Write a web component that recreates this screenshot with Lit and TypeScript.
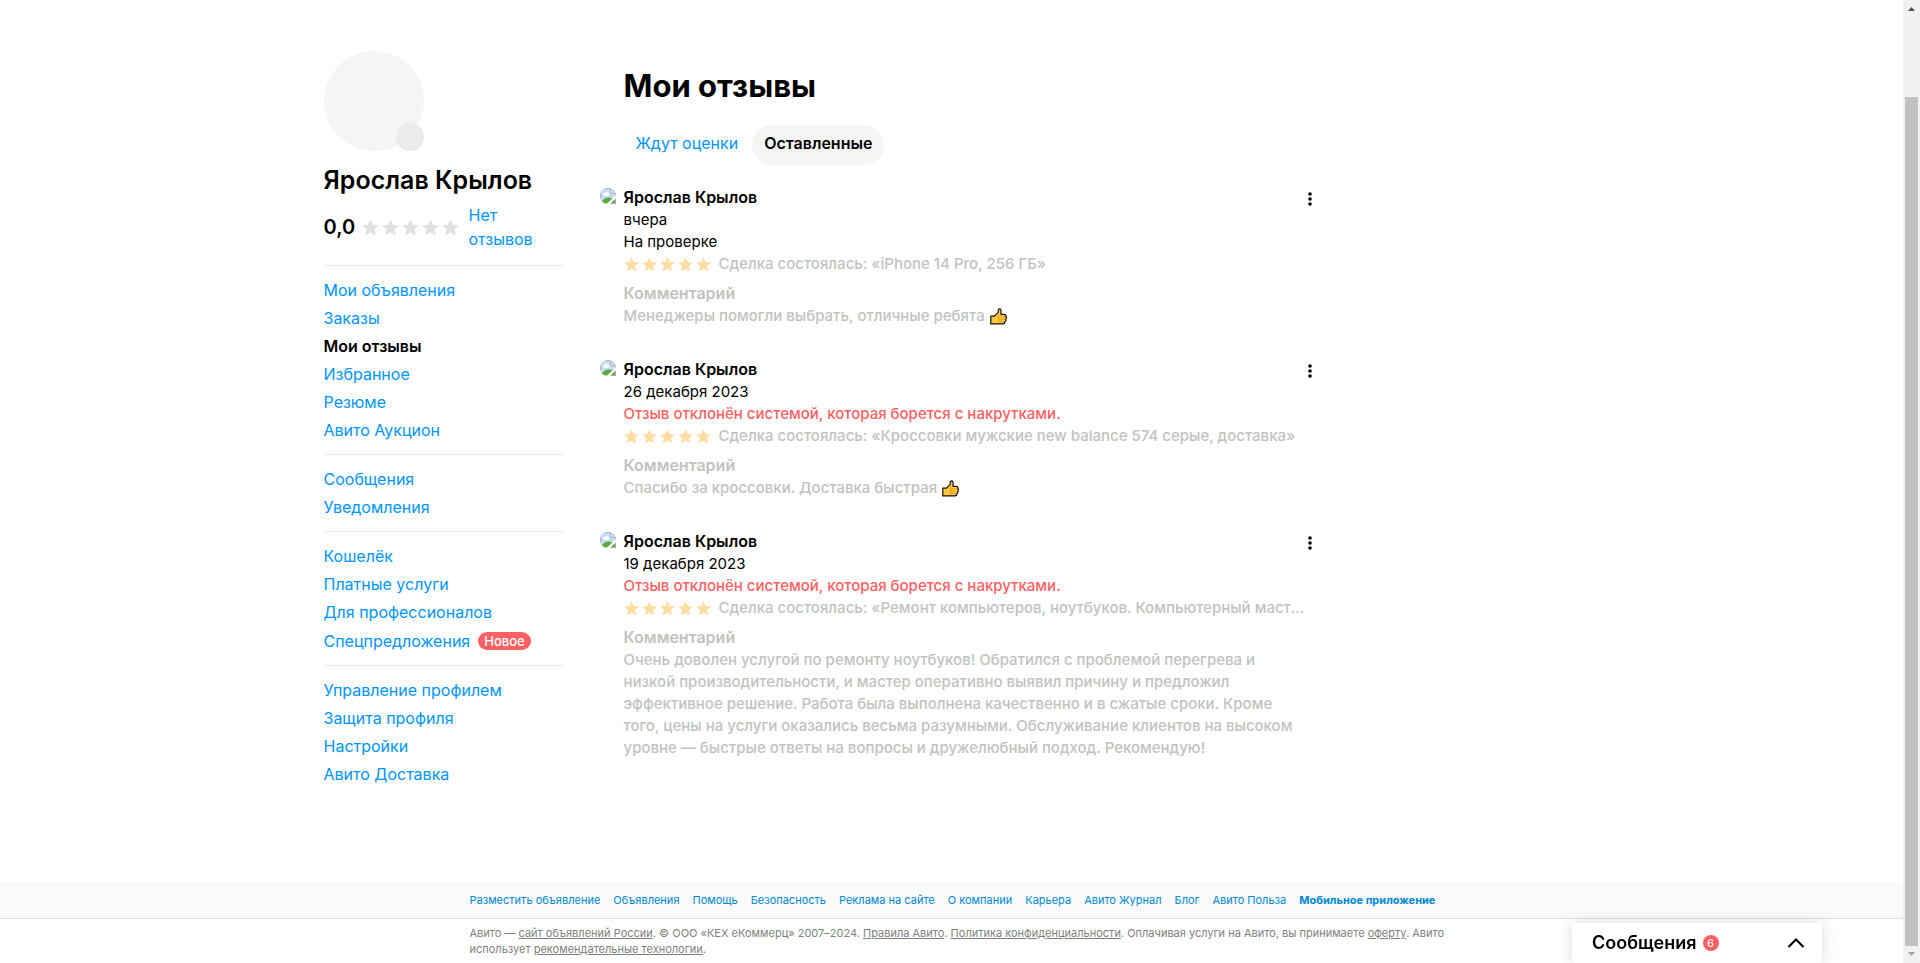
import { LitElement, html, css, svg } from "lit";
import { customElement, property } from "lit/decorators.js";
import { classMap } from "lit/directives/class-map.js";

interface NavItem {
  label: string;
  active?: boolean;
  badge?: string;
}

interface Review {
  author: string;
  date: string;
  status: string;
  rejected: boolean;
  deal: string;
  comment: string;
  thumb: boolean;
}

const NAV: NavItem[][] = [
  [
    { label: "Мои объявления" },
    { label: "Заказы" },
    { label: "Мои отзывы", active: true },
    { label: "Избранное" },
    { label: "Резюме" },
    { label: "Авито Аукцион" },
  ],
  [{ label: "Сообщения" }, { label: "Уведомления" }],
  [
    { label: "Кошелёк" },
    { label: "Платные услуги" },
    { label: "Для профессионалов" },
    { label: "Спецпредложения", badge: "Новое" },
  ],
  [
    { label: "Управление профилем" },
    { label: "Защита профиля" },
    { label: "Настройки" },
    { label: "Авито Доставка" },
  ],
];

const REJECTED = "Отзыв отклонён системой, которая борется с накрутками.";

const REVIEWS: Review[] = [
  {
    author: "Ярослав Крылов",
    date: "вчера",
    status: "На проверке",
    rejected: false,
    deal: "Сделка состоялась: «iPhone 14 Pro, 256 ГБ»",
    comment: "Менеджеры помогли выбрать, отличные ребята",
    thumb: true,
  },
  {
    author: "Ярослав Крылов",
    date: "26 декабря 2023",
    status: REJECTED,
    rejected: true,
    deal: "Сделка состоялась: «Кроссовки мужские new balance 574 серые, доставка»",
    comment: "Спасибо за кроссовки. Доставка быстрая",
    thumb: true,
  },
  {
    author: "Ярослав Крылов",
    date: "19 декабря 2023",
    status: REJECTED,
    rejected: true,
    deal: "Сделка состоялась: «Ремонт компьютеров, ноутбуков. Компьютерный мастер»",
    comment:
      "Очень доволен услугой по ремонту ноутбуков! Обратился с проблемой перегрева и низкой производительности, и мастер оперативно выявил причину и предложил эффективное решение. Работа была выполнена качественно и в сжатые сроки. Кроме того, цены на услуги оказались весьма разумными. Обслуживание клиентов на высоком уровне — быстрые ответы на вопросы и дружелюбный подход. Рекомендую!",
    thumb: false,
  },
];

const FOOTER = [
  "Разместить объявление",
  "Объявления",
  "Помощь",
  "Безопасность",
  "Реклама на сайте",
  "О компании",
  "Карьера",
  "Авито Журнал",
  "Блог",
  "Авито Польза",
];

const base = css`
  * {
    box-sizing: border-box;
  }
  a {
    color: #0095ff;
    text-decoration: none;
  }
  button {
    font: inherit;
    color: inherit;
    background: none;
    border: 0;
    padding: 0;
    cursor: pointer;
  }
  svg {
    display: block;
    flex: none;
  }
`;

@customElement("star-row")
export class StarRow extends LitElement {
  @property({ type: Number }) size = 15;

  static styles = css`
    :host {
      display: flex;
      gap: 3px;
      flex: none;
    }
    svg {
      display: block;
      fill: currentColor;
    }
  `;

  render() {
    return [1, 2, 3, 4, 5].map(
      () => html`<svg width=${this.size} height=${this.size} viewBox="0 0 16 16" aria-hidden="true">
        ${svg`<path d="M8 .3 10.3 5.3 15.8 6 11.7 9.700 12.900 15.300 8 12.500 3.100 15.300 4.300 9.700 .2 6 5.700 5.300Z" />`}
      </svg>`
    );
  }
}

@customElement("side-bar")
export class SideBar extends LitElement {
  static styles = [
    base,
    css`
      :host {
        display: block;
        width: 240px;
        flex: none;
      }
      .avatar {
        position: relative;
        width: 100px;
        height: 100px;
        border-radius: 50%;
        background: #f5f5f5;
      }
      .camera {
        position: absolute;
        right: 0;
        bottom: 0;
        width: 28px;
        height: 28px;
        border-radius: 50%;
        background: #ebebeb;
      }
      .name {
        margin: 13px 0 7px;
        font-size: 25px;
        line-height: 32px;
        font-weight: 600;
      }
      .rating {
        display: flex;
        align-items: center;
        margin-bottom: 14px;
      }
      .score {
        font-size: 20px;
        font-weight: 600;
        width: 38px;
      }
      .stars {
        color: #e0e0e0;
        margin-right: 10px;
      }
      .none {
        width: min-content;
      }
      .group {
        list-style: none;
        margin: 0;
        padding: 12px 0;
        border-top: 1px solid #ebebeb;
        display: flex;
        flex-direction: column;
        gap: 4px;
      }
      .item {
        display: flex;
        align-items: center;
        gap: 8px;
      }
      .tagged {
        min-height: 25px;
      }
      .active {
        color: #000;
        font-weight: 600;
      }
      .badge {
        background: #ff6163;
        color: #fff;
        border-radius: 9px;
        padding: 0 6px;
        font-size: 13px;
        line-height: 18px;
        font-weight: 500;
      }
    `,
  ];

  render() {
    return html`
      <div class="avatar"><div class="camera"></div></div>
      <h2 class="name">Ярослав Крылов</h2>
      <div class="rating">
        <span class="score">0,0</span>
        <star-row class="stars" .size=${17}></star-row>
        <a class="none" href="#">Нет отзывов</a>
      </div>
      <nav>
        ${NAV.map(
          (group) => html`<ul class="group">
            ${group.map(
              (i) => html`<li class=${classMap({ item: true, tagged: !!i.badge })}>
                <a href="#" class=${classMap({ active: !!i.active })}>${i.label}</a>
                ${i.badge ? html`<span class="badge">${i.badge}</span>` : ""}
              </li>`
            )}
          </ul>`
        )}
      </nav>
    `;
  }
}

@customElement("review-card")
export class ReviewCard extends LitElement {
  @property({ attribute: false }) review!: Review;

  static styles = [
    base,
    css`
      :host {
        display: flex;
        gap: 8px;
        font-size: 15px;
        line-height: 22px;
      }
      .photo {
        margin-top: 1px;
        width: 16px;
        height: 16px;
        border-radius: 8px 8px 0 8px;
      }
      .body {
        flex: 1;
        min-width: 0;
      }
      .head {
        display: flex;
        justify-content: space-between;
      }
      .author,
      .label {
        margin: 0;
        padding-bottom: 2px;
        font-size: 16px;
        line-height: 20px;
        font-weight: 600;
      }
      .menu {
        display: grid;
        place-items: center;
        width: 20px;
        height: 22px;
        padding-top: 2px;
      }
      .text {
        margin: 0;
      }
      .rejected {
        color: #ff6163;
        font-weight: 500;
      }
      .deal {
        display: flex;
        align-items: center;
        gap: 8px;
        color: #c2c2c2;
        font-weight: 500;
        margin-bottom: 8px;
        padding-right: 8px;
      }
      .stars {
        color: #ffdca0;
      }
      .title {
        white-space: nowrap;
        overflow: hidden;
        text-overflow: ellipsis;
      }
      .label {
        color: #c2c2c2;
      }
      .comment {
        margin: 0;
        padding-right: 16px;
        color: #c2c2c2;
        font-weight: 500;
      }
      .thumb {
        display: inline-block;
        vertical-align: -4px;
        margin-left: 1px;
      }
    `,
  ];

  render() {
    const r = this.review;
    return html`
      <svg class="photo" viewBox="0 0 16 16" role="img" aria-label="Фото">
        <path d="M0 0H11L16 5V16H0Z" fill="#a9acb0" />
        <path d="M1 1H10.500V5.500H15V15H1Z" fill="#c6dafa" />
        <path d="M3 6.500a2 2 0 0 1 2-2 2.300 2.300 0 0 1 4 1 1.500 1.500 0 0 1 0 2.500H4a1.500 1.500 0 0 1-1-1.500Z" fill="#f4f8ff" />
        <path d="M1 15C3 11 6 9.500 9 9.500 11.500 9.500 14 11 15 12.500V15Z" fill="#57ab3b" />
        <path d="M11 1 15 5H11Z" fill="#fff" stroke="#a9acb0" stroke-width=".8" />
        <path d="M6.500 16 16 7V10L10 16Z" fill="#fff" />
      </svg>
      <div class="body">
        <div class="head">
          <h3 class="author">${r.author}</h3>
          <button class="menu" aria-label="Меню отзыва">
            <svg width="4" height="14" viewBox="0 0 4 14">
              <circle cx="2" cy="2" r="1.800" />
              <circle cx="2" cy="7" r="1.800" />
              <circle cx="2" cy="12" r="1.800" />
            </svg>
          </button>
        </div>
        <p class="text">${r.date}</p>
        <p class=${classMap({ text: true, rejected: r.rejected })}>${r.status}</p>
        <div class="deal">
          <star-row class="stars"></star-row>
          <span class="title">${r.deal}</span>
        </div>
        <h4 class="label">Комментарий</h4>
        <p class="comment">
          ${r.comment}
          ${r.thumb
            ? html`<svg class="thumb" width="17" height="17" viewBox="0 0 17 17" role="img" aria-label="Палец вверх">
                <path d="M.8 8.200H4.500L8.200 4.300V2.200C8.200.4 11 .3 11 2.500V6.300H14C15.500 6.300 16 7 15.800 8.200 16.500 9 16.500 10 15.900 10.800 16.300 12 15.800 13 15 13.500 15 15.200 14 15.900 12.800 15.900H.8Z" fill="#ffc83d" stroke="#111" stroke-width="1.200" stroke-linejoin="round" />
                <path d="M8.500 7V15M9 9H15M9 11.300H15M9 13.500H14" fill="none" stroke="#d67d00" stroke-width=".5" />
              </svg>`
            : ""}
        </p>
      </div>
    `;
  }
}

@customElement("app-root")
export class AppRoot extends LitElement {
  static styles = [
    base,
    css`
      :host {
        display: flex;
        min-height: 100vh;
        background: #fff;
        color: #000;
        font: 400 16px/24px Inter, "Noto Sans", sans-serif;
      }
      .page {
        flex: 1;
        min-width: 0;
        display: flex;
        flex-direction: column;
        position: relative;
      }
      .layout {
        flex: 1;
        display: flex;
        gap: 36px;
        width: 100%;
        max-width: 1256px;
        margin: 0 auto;
        padding: 51px 0 48px;
      }
      .content {
        flex: 1;
        min-width: 0;
        max-width: 720px;
      }
      .title {
        margin: 15px 0 19px 24px;
        font-size: 31px;
        line-height: 40px;
        font-weight: 700;
      }
      .tabs {
        display: flex;
        gap: 2px;
        margin: 0 0 22px 24px;
      }
      .tabs .tab {
        height: 40px;
        padding: 0 12px 4px;
        border-radius: 20px;
        color: #0095ff;
      }
      .tabs .current {
        background: #f5f5f5;
        color: #000;
        font-weight: 600;
      }
      .reviews {
        display: flex;
        flex-direction: column;
        gap: 32px;
      }
      .wrap {
        max-width: 1000px;
        margin: 0 auto;
        padding-left: 18px;
      }
      .links {
        background: #fafafa;
        border-bottom: 1px solid #dedede;
        font-size: 11px;
        line-height: 16px;
        padding: 10px 0;
      }
      .links .wrap {
        display: flex;
        gap: 13px;
        white-space: nowrap;
      }
      .links a {
        color: #0088d6;
      }
      .links .app {
        font-weight: 700;
      }
      .legal {
        font-size: 11px;
        line-height: 16px;
        color: #808080;
        padding: 6px 0;
      }
      .legal a {
        color: inherit;
        text-decoration: underline;
      }
      .chat {
        position: fixed;
        right: 98px;
        bottom: 0;
        width: 250px;
        height: 40px;
        padding: 0 17px 0 20px;
        display: flex;
        align-items: center;
        gap: 6px;
        background: #fff;
        border-radius: 3px;
        box-shadow: 0 0 16px rgba(0, 0, 0, 0.14);
        font-size: 18px;
        font-weight: 600;
      }
      .count {
        width: 16px;
        height: 16px;
        border-radius: 50%;
        background: #ff6163;
        color: #fff;
        font-size: 11px;
        line-height: 16px;
        font-weight: 500;
        text-align: center;
        margin-right: auto;
      }
      .rail {
        width: 17px;
        flex: none;
        background: #f1f1f1;
        display: flex;
        flex-direction: column;
        align-items: center;
      }
      .gap {
        flex: 80;
      }
      .thumb {
        flex: 849;
        width: 13px;
        background: #c1c1c1;
      }
    `,
  ];

  render() {
    return html`
      <div class="page">
        <div class="layout">
          <side-bar></side-bar>
          <main class="content">
            <h1 class="title">Мои отзывы</h1>
            <div class="tabs">
              <button class="tab">Ждут оценки</button>
              <button class="tab current">Оставленные</button>
            </div>
            <div class="reviews">
              ${REVIEWS.map((r) => html`<review-card .review=${r}></review-card>`)}
            </div>
          </main>
        </div>
        <footer>
          <div class="links">
            <div class="wrap">
              ${FOOTER.map((l) => html`<a href="#">${l}</a>`)}
              <a class="app" href="#">Мобильное приложение</a>
            </div>
          </div>
          <div class="legal">
            <div class="wrap">
              Авито — <a href="#">сайт объявлений России</a>. © ООО «КЕХ еКоммерц» 2007–2024.
              <a href="#">Правила Авито</a>. <a href="#">Политика конфиденциальности</a>. Оплачивая
              услуги на Авито, вы принимаете <a href="#">оферту</a>. Авито использует
              <a href="#">рекомендательные технологии</a>.
            </div>
          </div>
        </footer>
        <button class="chat">
          <span>Сообщения</span>
          <span class="count">6</span>
          <svg width="18" height="12" viewBox="0 0 18 12" fill="none" stroke="#000" stroke-width="2">
            <path d="M1.500 10 9 2.500 16.500 10" />
          </svg>
        </button>
      </div>
      <div class="rail" aria-hidden="true">
        <svg width="17" height="17" viewBox="0 0 17 17"><path d="M5 11 8.500 7 12 11Z" fill="#505050" /></svg>
        <div class="gap"></div>
        <div class="thumb"></div>
        <svg width="17" height="17" viewBox="0 0 17 17"><path d="M5 6 8.500 10 12 6Z" fill="#a3a3a3" /></svg>
      </div>
    `;
  }
}
